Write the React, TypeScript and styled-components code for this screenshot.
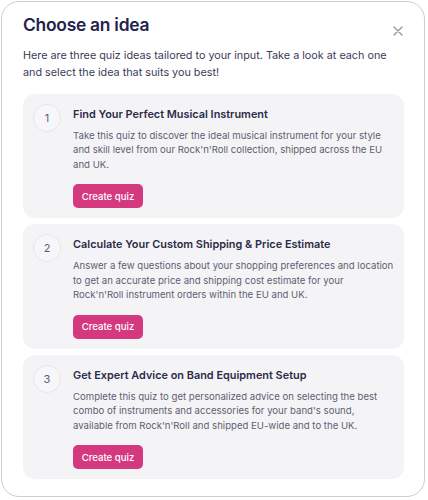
import React from "react";
import styled, { createGlobalStyle } from "styled-components";

const Global = createGlobalStyle`
  html, body { margin: 0; padding: 0; background: #ffffff; }
  body { font-family: Inter, "Noto Sans", Arial, sans-serif; -webkit-font-smoothing: antialiased; }
  * { box-sizing: border-box; }
`;

const Modal = styled.div`
  margin: 1px;
  width: 424px;
  height: 496px;
  border: 1px solid #cdcdd2;
  border-radius: 18px;
  background: #ffffff;
  padding: 11px 20px 0 21px;
  display: flex;
  flex-direction: column;
`;

const Header = styled.div`
  display: flex;
  align-items: flex-start;
  justify-content: space-between;
`;

const Title = styled.h1`
  margin: 0;
  font-size: 17.4px;
  line-height: 23px;
  font-weight: 600;
  color: #22224a;
  letter-spacing: -0.25px;
`;

const CloseButton = styled.button`
  margin: 12px 0 0 0;
  padding: 0;
  border: 0;
  background: transparent;
  width: 12px;
  height: 12px;
  display: flex;
  align-items: center;
  justify-content: center;
  color: #8d92aa;
  cursor: pointer;
`;

const Intro = styled.p`
  margin: 9.5px 0 0 0;
  font-size: 10.8px;
  line-height: 17px;
  color: #3b3b57;
`;

const List = styled.div`
  margin-top: 13px;
  display: flex;
  flex-direction: column;
  gap: 6px;
`;

const Card = styled.div`
  background: #f4f4f6;
  border-radius: 12px;
  padding: 10px 10px 10px 10px;
  display: flex;
  gap: 12px;
  align-items: flex-start;
`;

const Num = styled.div`
  flex: 0 0 28px;
  width: 28px;
  height: 28px;
  border-radius: 50%;
  border: 1px solid #e5e6ee;
  background: #f7f7fa;
  display: flex;
  align-items: center;
  justify-content: center;
  font-size: 11px;
  color: #5b5c72;
`;

const Body = styled.div`
  flex: 1;
  padding-top: 2px;
  display: flex;
  flex-direction: column;
  align-items: flex-start;
`;

const CardTitle = styled.h2`
  margin: 0;
  font-size: 10.9px;
  line-height: 16px;
  font-weight: 600;
  color: #2b2b48;
`;

const Desc = styled.p`
  margin: 7px 0 0 0;
  font-size: 9.6px;
  line-height: 14.5px;
  color: #5d5e72;
`;

const CreateButton = styled.button`
  margin-top: 12px;
  height: 24px;
  width: 70px;
  padding: 0;
  border: 0;
  border-radius: 5px;
  background: #d4397f;
  color: #ffffff;
  font-family: inherit;
  font-size: 9.6px;
  font-weight: 500;
  cursor: pointer;
`;

const ideas = [
  {
    title: "Find Your Perfect Musical Instrument",
    desc: "Take this quiz to discover the ideal musical instrument for your style and skill level from our Rock'n'Roll collection, shipped across the EU and UK.",
  },
  {
    title: "Calculate Your Custom Shipping & Price Estimate",
    desc: "Answer a few questions about your shopping preferences and location to get an accurate price and shipping cost estimate for your Rock'n'Roll instrument orders within the EU and UK.",
  },
  {
    title: "Get Expert Advice on Band Equipment Setup",
    desc: "Complete this quiz to get personalized advice on selecting the best combo of instruments and accessories for your band's sound, available from Rock'n'Roll and shipped EU-wide and to the UK.",
  },
];

export default function App() {
  return (
    <>
      <Global />
      <Modal>
        <Header>
          <Title>Choose an idea</Title>
          <CloseButton aria-label="Close">
            <svg width="10" height="10" viewBox="0 0 10 10" fill="none">
              <path d="M1 1L9 9M9 1L1 9" stroke="currentColor" strokeWidth="1.3" strokeLinecap="round" />
            </svg>
          </CloseButton>
        </Header>
        <Intro>
          Here are three quiz ideas tailored to your input. Take a look at each one and select the idea that suits you best!
        </Intro>
        <List>
          {ideas.map((idea, i) => (
            <Card key={i}>
              <Num>{i + 1}</Num>
              <Body>
                <CardTitle>{idea.title}</CardTitle>
                <Desc>{idea.desc}</Desc>
                <CreateButton>Create quiz</CreateButton>
              </Body>
            </Card>
          ))}
        </List>
      </Modal>
    </>
  );
}
